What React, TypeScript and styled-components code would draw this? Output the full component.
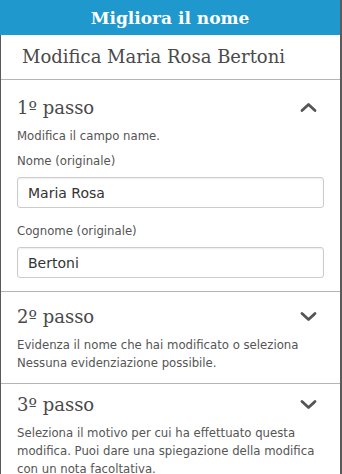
import React from 'react';
import styled, {createGlobalStyle} from "styled-components";

const GlobalStyle = createGlobalStyle`
  html, body {
    margin: 0;
    padding: 0;
    background: #ffffff;
  }
  * {
    box-sizing: border-box;
  }
`

type StepHeadPropsType = {
    title: string
    open: boolean
}

export default function App() {
    return (
        <>
            <GlobalStyle/>
            <Panel>
                <Header>Migliora il nome</Header>
                <Body>
                    <Subtitle>Modifica Maria Rosa Bertoni</Subtitle>

                    <Step top={16} bottom={13}>
                        <StepHead title="1º passo" open={true}/>
                        <Text>Modifica il campo name.</Text>
                        <Field space={7}>
                            <Label>Nome (originale)</Label>
                            <Input defaultValue="Maria Rosa"/>
                        </Field>
                        <Field space={14}>
                            <Label>Cognome (originale)</Label>
                            <Input defaultValue="Bertoni"/>
                        </Field>
                    </Step>

                    <Step top={13} bottom={11}>
                        <StepHead title="2º passo" open={false}/>
                        <Text>Evidenza il nome che hai modificato o seleziona Nessuna evidenziazione possibile.</Text>
                    </Step>

                    <Step top={9} bottom={11}>
                        <StepHead title="3º passo" open={false}/>
                        <Text>Seleziona il motivo per cui ha effettuato questa modifica. Puoi dare una spiegazione della modifica con un nota facoltativa.</Text>
                    </Step>
                </Body>
            </Panel>
        </>
    );
}

const StepHead = (props: StepHeadPropsType) => {
    return (
        <HeadRow>
            <StepTitle>{props.title}</StepTitle>
            <Chevron width="17" height="11" viewBox="0 0 17 11" open={props.open}>
                <path d="M2 2.5 L8.5 8.5 L15 2.5" fill="none" stroke="#555" strokeWidth="2.8" strokeLinecap="round" strokeLinejoin="round"/>
            </Chevron>
        </HeadRow>
    )
}

const Panel = styled.div`
  width: 342px;
  height: 474px;
  overflow: hidden;
  border-right: 2px solid #5a5a5a;
  display: flex;
  flex-direction: column;
`
const Header = styled.div`
  height: 35px;
  flex-shrink: 0;
  background: #1e98cd;
  color: #ffffff;
  font-family: "DejaVu Serif", serif;
  font-weight: bold;
  font-size: 17px;
  display: flex;
  align-items: center;
  justify-content: center;
`
const Body = styled.div`
  flex: 1;
  border-left: 1px solid #5a5a5a;
`
const Subtitle = styled.div`
  height: 45px;
  padding: 0 0 1px 21px;
  display: flex;
  align-items: center;
  font-family: "DejaVu Serif", serif;
  font-size: 18px;
  color: #4a4a4a;
  border-bottom: 1px solid #b5b5b5;
`
const Step = styled.section<{ top: number, bottom: number }>`
  padding: ${props => props.top}px 16px ${props => props.bottom}px 16px;
  border-bottom: 1px solid #b5b5b5;
`
const HeadRow = styled.div`
  display: flex;
  align-items: center;
  justify-content: space-between;
  height: 24px;
  margin-bottom: 7px;
`
const StepTitle = styled.h2`
  margin: 0;
  font-family: "DejaVu Serif", serif;
  font-weight: normal;
  font-size: 18px;
  line-height: 24px;
  color: #4a4a4a;
`
const Chevron = styled.svg<{ open: boolean }>`
  margin-right: 7px;
  margin-bottom: 2px;
  transform: ${props => props.open ? 'rotate(180deg)' : 'none'};
`
const Text = styled.p`
  margin: 0;
  font-family: "DejaVu Sans Condensed", "DejaVu Sans", sans-serif;
  font-size: 13px;
  line-height: 18px;
  color: #555555;
`
const Field = styled.div<{ space: number }>`
  margin-top: ${props => props.space}px;
  display: flex;
  flex-direction: column;
`
const Label = styled.label`
  font-family: "DejaVu Sans Condensed", "DejaVu Sans", sans-serif;
  font-size: 13px;
  line-height: 18px;
  color: #555555;
  margin-bottom: 7px;
`
const Input = styled.input`
  height: 31px;
  width: 100%;
  border: 1px solid #cccccc;
  border-radius: 3px;
  padding: 0 10px;
  font-family: "DejaVu Sans", sans-serif;
  font-size: 14px;
  color: #333333;
  box-shadow: inset 0 1px 2px rgba(0, 0, 0, 0.07);
  outline: none;
`
